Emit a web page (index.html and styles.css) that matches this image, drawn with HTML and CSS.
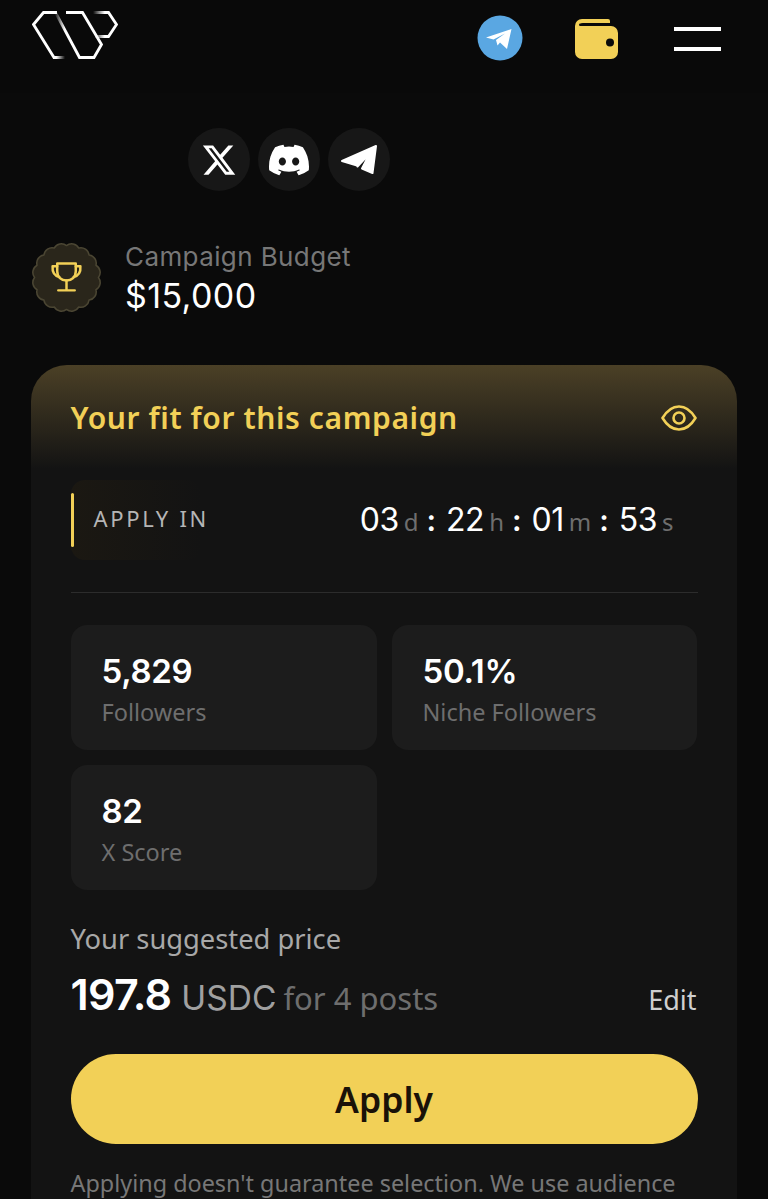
FILE: index.html
```html
<!DOCTYPE html>
<html lang="en">
<head>
<meta charset="utf-8">
<title>Campaign</title>
<link rel="stylesheet" href="styles.css">
</head>
<body>
<div class="page">
  <header class="topbar">
    <svg class="logo" viewBox="0 0 86 48" fill="none" stroke-width="2.800" stroke-linejoin="miter">
      <defs>
        <linearGradient id="fadeA" x1="0" y1="0" x2="1" y2="0"><stop offset="0.72" stop-color="#fff"/><stop offset="1" stop-color="#fff" stop-opacity="0"/></linearGradient>
        <linearGradient id="fadeB" x1="0" y1="0" x2="1" y2="0"><stop offset="0" stop-color="#fff" stop-opacity="0.1"/><stop offset="0.2" stop-color="#fff"/></linearGradient>
        <linearGradient id="fadeC" x1="0" y1="0" x2="1" y2="0"><stop offset="0" stop-color="#fff" stop-opacity="0"/><stop offset="0.5" stop-color="#fff"/></linearGradient>
      </defs>
      <path d="M21 46H22.500M25 1.500H11.500L1.500 13.500L22 46.500H33" stroke="url(#fadeA)"/>
      <path d="M23.500 1.500L47.500 46.500H62L69.500 33.500L50.500 1.500H34" stroke="url(#fadeB)"/>
      <path d="M61 1.500H76.500L84.500 13.500L76.500 25.500H63" stroke="url(#fadeC)"/>
    </svg>
    <div class="topbar-actions">
      <svg class="tg-badge" viewBox="0 0 46 46">
        <circle cx="23" cy="23" r="22.500" fill="#5aa7e2"/>
        <path d="M9 22.500 34.500 14 30 34 23 27.500 20.500 30.500 19 25 28 18.500 16.500 24.500Z" fill="#fff"/>
      </svg>
      <svg class="wallet" viewBox="0 0 43 40">
        <path d="M7 0H33a2 2 0 0 1 2 2V4H8a3 3 0 0 0-3 3H36a7 7 0 0 1 7 7V33a7 7 0 0 1-7 7H7a7 7 0 0 1-7-7V7a7 7 0 0 1 7-7Z" fill="#f2d057"/>
        <rect x="4" y="4.500" width="31" height="2.500" fill="#0a0a0a" rx="1.200"/>
        <circle cx="35" cy="23.500" r="4" fill="#0a0a0a"/>
      </svg>
      <div class="menu"><span class="menu-line"></span><span class="menu-line"></span></div>
    </div>
  </header>

  <div class="socials">
    <div class="social">
      <svg class="social-x" viewBox="0 0 24 24" fill="#fff"><path d="M18.244 2.250h3.308l-7.227 8.260 8.502 11.240H16.170l-5.214-6.817L4.990 21.750H1.680l7.730-8.835L1.254 2.250H8.080l4.713 6.231Zm-1.161 17.520h1.833L7.084 4.126H5.117Z"/></svg>
    </div>
    <div class="social">
      <svg class="social-d" viewBox="0 0 24 24" fill="#fff"><path d="M20.317 4.370a19.800 19.800 0 0 0-4.885-1.515.074.074 0 0 0-.079.037c-.21.375-.444.864-.608 1.250a18.270 18.270 0 0 0-5.487 0 12.640 12.640 0 0 0-.617-1.250.077.077 0 0 0-.079-.037A19.740 19.740 0 0 0 3.677 4.370a.070.070 0 0 0-.032.027C.533 9.046-.320 13.580.099 18.057a.082.082 0 0 0 .031.057 19.900 19.900 0 0 0 5.993 3.030.078.078 0 0 0 .084-.028c.462-.630.874-1.295 1.226-1.994a.076.076 0 0 0-.041-.106 13.100 13.100 0 0 1-1.872-.892.077.077 0 0 1-.008-.128c.126-.094.252-.192.372-.292a.074.074 0 0 1 .077-.010c3.928 1.793 8.180 1.793 12.062 0a.074.074 0 0 1 .078.009c.120.100.246.199.373.293a.077.077 0 0 1-.006.127c-.598.350-1.220.645-1.873.892a.077.077 0 0 0-.041.107c.360.698.772 1.362 1.225 1.993a.076.076 0 0 0 .084.028 19.840 19.840 0 0 0 6.002-3.030.077.077 0 0 0 .032-.054c.500-5.177-.838-9.674-3.549-13.660a.061.061 0 0 0-.031-.030ZM8.020 15.330c-1.183 0-2.157-1.085-2.157-2.419 0-1.333.956-2.419 2.157-2.419 1.210 0 2.176 1.096 2.157 2.420 0 1.333-.956 2.418-2.157 2.418Zm7.975 0c-1.183 0-2.157-1.085-2.157-2.419 0-1.333.955-2.419 2.157-2.419 1.210 0 2.176 1.096 2.157 2.420 0 1.333-.946 2.418-2.157 2.418Z"/></svg>
    </div>
    <div class="social">
      <svg class="social-t" viewBox="0 0 38 32" fill="#fff" stroke="#fff" stroke-width="2" stroke-linejoin="round"><path d="M2 17 36 2 32.500 29 22 24.500 30 9 17.500 22.500 17 21.500Z"/></svg>
    </div>
  </div>

  <section class="budget">
    <svg class="budget-badge" viewBox="1.500 1.500 67 67">
      <path d="M35 4A8 8 0 0 1 46.900 6.400A8 8 0 0 1 56.900 13.100A8 8 0 0 1 63.600 23.100A8 8 0 0 1 66 35A8 8 0 0 1 63.600 46.900A8 8 0 0 1 56.900 56.900A8 8 0 0 1 46.900 63.600A8 8 0 0 1 35 66A8 8 0 0 1 23.100 63.600A8 8 0 0 1 13.100 56.900A8 8 0 0 1 6.400 46.900A8 8 0 0 1 4 35A8 8 0 0 1 6.400 23.100A8 8 0 0 1 13.100 13.100A8 8 0 0 1 23.100 6.400A8 8 0 0 1 35 4Z" fill="#2a261b" stroke="#4b4633" stroke-width="1.500" stroke-linejoin="round"/>
      <g fill="none" stroke="#f2d057" stroke-width="2.400" stroke-linecap="round" stroke-linejoin="round">
        <path d="M26 21.500H44V29C44 34.500 40 38 35 38S26 34.500 26 29Z"/>
        <path d="M26 24H21.500C21 30 24 33.500 28 34.500M44 24H48.500C49 30 46 33.500 42 34.500"/>
        <path d="M35 38V47M27 47.500H43"/>
      </g>
    </svg>
    <div class="budget-text">
      <div class="budget-label">Campaign Budget</div>
      <div class="budget-value">$15,000</div>
    </div>
  </section>

  <main class="card">
    <div class="card-head">
      <h1 class="card-title">Your fit for this campaign</h1>
      <svg class="eye" viewBox="0 0 36 26" fill="none" stroke="#f2d057" stroke-width="2.600">
        <path d="M1.500 13C6 5.500 11.500 1.500 18 1.500S30 5.500 34.500 13C30 20.500 24.500 24.500 18 24.500S6 20.500 1.500 13Z" stroke-linejoin="round"/>
        <circle cx="18" cy="13" r="5.500"/>
      </svg>
    </div>

    <div class="apply-row">
      <div class="apply-tag"><span class="apply-bar"></span><span class="apply-text">APPLY IN</span></div>
      <div class="timer">
        <span class="num">03</span><span class="unit">d</span><span class="colon">:</span>
        <span class="num">22</span><span class="unit">h</span><span class="colon">:</span>
        <span class="num">01</span><span class="unit">m</span><span class="colon">:</span>
        <span class="num">53</span><span class="unit">s</span>
      </div>
    </div>

    <hr class="divider">

    <div class="stats">
      <div class="stat"><div class="stat-value">5,829</div><div class="stat-label">Followers</div></div>
      <div class="stat"><div class="stat-value">50.1%</div><div class="stat-label">Niche Followers</div></div>
      <div class="stat"><div class="stat-value">82</div><div class="stat-label">X Score</div></div>
    </div>

    <div class="price-label">Your suggested price</div>
    <div class="price-row">
      <div class="price"><span class="price-num">197.8</span><span class="price-cur">USDC</span><span class="price-for">for 4 posts</span></div>
      <div class="edit">Edit</div>
    </div>

    <button class="apply-btn">Apply</button>
    <p class="note">Applying doesn't guarantee selection. We use audience</p>
  </main>
</div>
</body>
</html>
```
FILE: styles.css
```css
* { box-sizing: border-box; }
html, body { margin: 0; padding: 0; background: #0a0a0a; }
body { height: 1199px; overflow: hidden; font-family: "Noto Sans", sans-serif; color: #fff; }
.page { width: 768px; height: 1199px; display: flex; flex-direction: column; }

.topbar { flex: none; height: 93px; background: #090909; display: flex; justify-content: space-between; align-items: flex-start; padding: 11px 47px 0 32px; }
.logo { width: 86px; height: 48px; display: block; }
.topbar-actions { display: flex; align-items: flex-start; }
.tg-badge { width: 46px; height: 46px; margin-top: 4px; margin-right: 52px; }
.wallet { width: 43px; height: 40px; margin-top: 8px; margin-right: 56px; }
.menu { width: 47px; margin-top: 16px; display: flex; flex-direction: column; gap: 16px; }
.menu-line { display: block; height: 4px; background: #fff; }

.socials { flex: none; display: flex; gap: 8px; padding: 35px 0 0 188px; }
.social { width: 62px; height: 63px; border-radius: 50%; background: #171717; display: flex; align-items: center; justify-content: center; }
.social-x { width: 36px; height: 36px; }
.social-d { width: 40px; height: 40px; }
.social-t { width: 38px; height: 32px; }

.budget { flex: none; display: flex; align-items: center; gap: 25px; padding: 52px 0 0 32px; height: 121px; }
.budget-badge { width: 69px; height: 69px; flex: none; }
.budget-text { margin-left: -1px; padding-top: 6px; }
.budget-label { font-family: Inter, sans-serif; font-size: 26px; line-height: 30px; letter-spacing: 0.4px; color: #777; }
.budget-value { font-family: Inter, sans-serif; font-size: 34px; line-height: 48px; font-weight: 400; color: #fff; letter-spacing: 0.400px; }

.card { flex: 1; margin: 53px 31px 0; padding: 27px 39.5px 0; border-radius: 36px 36px 0 0; background: linear-gradient(180deg, #4b4026 0, #131313 104px); background-color: #131313; overflow: hidden; }
.card-head { display: flex; justify-content: space-between; align-items: center; height: 51px; }
.card-title { margin: 0; font-size: 30px; font-weight: 600; line-height: 51px; letter-spacing: 0.6px; color: #f2d057; }
.eye { width: 36px; height: 26px; margin-right: 1px; }

.apply-row { display: flex; justify-content: space-between; align-items: center; margin-top: 48px; height: 57px; }
.apply-tag { height: 80px; width: 130px; display: flex; align-items: center; gap: 20px; border-radius: 14px; background: linear-gradient(90deg, #1b1812, #131313); }
.apply-bar { flex: none; width: 3px; height: 54px; border-radius: 2px; background: #f2d057; }
.apply-text { font-size: 22px; letter-spacing: 2.700px; color: #b5b5b5; white-space: nowrap; margin-bottom: 4px; }
.timer { display: flex; align-items: baseline; font-family: Inter, sans-serif; margin-right: 24px; }
.num { font-size: 32px; font-weight: 400; color: #fff; letter-spacing: -0.500px; }
.unit { font-family: "Noto Sans", sans-serif; font-size: 24px; color: #6e6e6e; margin-left: 5px; }
.colon { font-size: 30px; font-weight: 600; margin: 0 10px 0 8px; }

.divider { border: 0; height: 1px; background: #2c2c2c; margin: 44px 0 32px; }

.stats { display: grid; grid-template-columns: 306px 305px; gap: 15px 15px; }
.stat { height: 125px; padding: 23px 31px 0; background: #1c1c1c; border-radius: 16px; }
.stat-value { font-family: Inter, sans-serif; font-size: 33px; line-height: 46px; font-weight: 600; color: #fff; letter-spacing: -0.300px; }
.stat-label { font-size: 23.500px; line-height: 36px; color: #6e6e6e; }

.price-label { margin-top: 29px; font-size: 27.300px; line-height: 40px; color: #a8a8a8; }
.price-row { display: flex; justify-content: space-between; align-items: baseline; margin-top: 9px; }
.price-num { font-family: Inter, sans-serif; font-size: 43px; font-weight: 600; color: #fff; letter-spacing: -0.700px; }
.price-cur { font-family: Inter, sans-serif; font-size: 33.500px; color: #a0a0a0; margin-left: 10px; }
.price-for { font-size: 31px; color: #6e6e6e; margin-left: 7px; }
.edit { font-size: 27px; color: #cfcfcf; margin-right: 1px; }

.apply-btn { display: block; width: 100%; height: 90px; margin-top: 34px; border: 0; border-radius: 45px; background: #f2d057; color: #1a1208; font-family: "Noto Sans", sans-serif; font-size: 35.500px; font-weight: 600; }
.note { margin: 23px 0 0; font-size: 23.400px; line-height: 32px; color: #777; white-space: nowrap; }
```
